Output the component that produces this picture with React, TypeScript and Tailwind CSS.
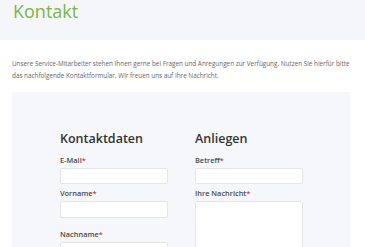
import React from 'react';

function Label({ text }: { text: string }) {
  return (
    <div className="text-[7.4px] leading-[10px] font-semibold text-[#4a4a4a]">
      {text}
      <span className="font-normal text-[#d0021b]">*</span>
    </div>
  );
}

function Input({ className = '' }: { className?: string }) {
  return (
    <div
      className={`mt-[3px] h-[16px] w-[108px] rounded-[2px] border border-[#e3e5ea] bg-white ${className}`}
    />
  );
}

export default function App() {
  return (
    <div className="h-[247px] w-[365px] overflow-hidden bg-white font-['Open_Sans',sans-serif]">
      <div className="h-[40px] bg-[#f5f6fa] pl-[13px] pt-[1px]">
        <h1 className="text-[18px] leading-[20px] text-[#7ab640]">Kontakt</h1>
      </div>

      <p className="mx-[12px] mt-[18px] whitespace-nowrap text-[6.35px] leading-[12px] text-[#666]">
        Unsere Service-Mitarbeiter stehen Ihnen gerne bei Fragen und Anregungen zur Verfügung. Nutzen Sie hierfür bitte
        <br />
        das nachfolgende Kontaktformular. Wir freuen uns auf Ihre Nachricht.
      </p>

      <div className="mx-[12px] mt-[10px] h-[200px] w-[338px] bg-[#f6f7fb] pl-[48px] pt-[39px]">
        <div className="flex gap-[27px]">
          <div className="w-[108px]">
            <h2 className="text-[12.5px] leading-[16px] font-semibold text-[#333]">Kontaktdaten</h2>
            <div className="mt-[8px]">
              <Label text="E-Mail" />
              <Input />
            </div>
            <div className="mt-[4px]">
              <Label text="Vorname" />
              <Input className="h-[17px]" />
            </div>
            <div className="mt-[11px]">
              <Label text="Nachname" />
              <Input />
            </div>
          </div>
          <div className="w-[108px]">
            <h2 className="text-[12.5px] leading-[16px] font-semibold text-[#333]">Anliegen</h2>
            <div className="mt-[8px]">
              <Label text="Betreff" />
              <Input className="w-[106px]" />
            </div>
            <div className="mt-[4px]">
              <Label text="Ihre Nachricht" />
              <div className="mt-[3px] h-[80px] w-[108px] rounded-[2px] border border-[#e3e5ea] bg-white" />
            </div>
          </div>
        </div>
      </div>
    </div>
  );
}
